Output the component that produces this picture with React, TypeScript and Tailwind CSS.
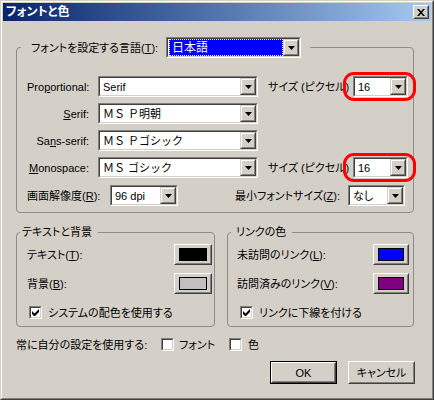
import type { ReactNode } from "react";

function Sunken({ className = "", children }: { className?: string; children: ReactNode }) {
  return (
    <div className={`border border-t-[#808080] border-l-[#808080] border-r-white border-b-white ${className}`}>
      <div className="flex h-full items-center border border-t-[#404040] border-l-[#404040] border-r-[#d4d0c8] border-b-[#d4d0c8] bg-white">
        {children}
      </div>
    </div>
  );
}

function Raised({ className = "", children }: { className?: string; children?: ReactNode }) {
  return (
    <div className={`border border-t-white border-l-white border-r-[#404040] border-b-[#404040] bg-[#d4d0c8] ${className}`}>
      <div className="flex h-full w-full items-center justify-center border border-t-[#d4d0c8] border-l-[#d4d0c8] border-r-[#808080] border-b-[#808080]">
        {children}
      </div>
    </div>
  );
}

function ArrowButton() {
  return (
    <div className="h-full w-[16px] shrink-0 border border-t-[#d4d0c8] border-l-[#d4d0c8] border-r-[#404040] border-b-[#404040] bg-[#d4d0c8]">
      <div className="flex h-full w-full items-center justify-center border border-t-white border-l-white border-r-[#808080] border-b-[#808080]">
        <svg width="7" height="4" viewBox="0 0 7 4">
          <path d="M0 0h7L3.5 4z" fill="#000" />
        </svg>
      </div>
    </div>
  );
}

function Select({ value, className = "", wide = false }: { value: string; className?: string; wide?: boolean }) {
  return (
    <Sunken className={`h-[21px] shrink-0 ${className}`}>
      <span className={`flex-1 truncate pl-[3px] ${wide ? "[font-feature-settings:normal]" : ""}`}>{value}</span>
      <ArrowButton />
    </Sunken>
  );
}

function Marked({ children }: { children: ReactNode }) {
  return (
    <div className="relative h-[21px] w-[55px] shrink-0">
      {children}
      <span className="pointer-events-none absolute -top-[4px] -right-[8px] -bottom-[4px] -left-[10px] rounded-[11px] border-[3px] border-[#ff0000]" />
    </div>
  );
}

function Checkbox({ checked = false }: { checked?: boolean }) {
  return (
    <div className="h-[13px] w-[13px] shrink-0 border border-t-[#808080] border-l-[#808080] border-r-white border-b-white">
      <div className="flex h-full w-full items-center justify-center border border-t-[#404040] border-l-[#404040] border-r-[#d4d0c8] border-b-[#d4d0c8] bg-white">
        {checked && (
          <svg width="7" height="7" viewBox="0 0 7 7">
            <path d="M0 2v3l2 2h1l4-4V0L2.5 4.5z" fill="#000" />
          </svg>
        )}
      </div>
    </div>
  );
}

function ColorButton({ color, className = "" }: { color: string; className?: string }) {
  return (
    <Raised className={`h-[21px] shrink-0 ${className}`}>
      <div className="mx-[3px] h-[13px] flex-1 border border-black" style={{ backgroundColor: color }} />
    </Raised>
  );
}

function FontRow({ label, value, size }: { label: ReactNode; value: string; size?: boolean }) {
  return (
    <div className="flex h-[21px] items-center">
      <span className="w-[62px] shrink-0 text-right whitespace-nowrap">{label}</span>
      <Select value={value} wide={value !== "Serif"} className="ml-[9px] w-[160px]" />
      {size && (
        <>
          <span className="ml-[10px] w-[85px] shrink-0 whitespace-nowrap">サイズ (ピクセル)</span>
          <Marked>
            <Select value="16" className="w-[55px]" />
          </Marked>
        </>
      )}
    </div>
  );
}

export default function App() {
  return (
    <div className="h-[400px] w-[434px] overflow-hidden font-['Liberation_Sans','Noto_Sans_CJK_JP',sans-serif] text-[11px] leading-[14px] text-black [font-feature-settings:'palt']">
      <div className="h-full border border-t-[#d4d0c8] border-l-[#d4d0c8] border-r-[#404040] border-b-[#404040]">
        <div className="flex h-full flex-col border border-t-white border-l-white border-r-[#808080] border-b-[#808080] bg-[#d4d0c8] p-px">
          <div className="flex h-[18px] shrink-0 items-center justify-between bg-linear-to-r from-[#0a246a] to-[#a6caf0] pr-[2px] pl-[3px]">
            <span className="text-[12px] font-bold text-white">フォントと色</span>
            <Raised className="h-[14px] w-[16px]">
              <svg width="8" height="7" viewBox="0 0 8 7">
                <path d="M0 0h2l2 2.2L6 0h2L5 3.5 8 7H6L4 4.8 2 7H0l3-3.5z" fill="#000" />
              </svg>
            </Raised>
          </div>

          <div className="flex flex-1 flex-col pr-[17px] pl-[13px]">
            <fieldset className="mt-[16px] rounded-[4px] border border-[#8c8c8c] p-0">
              <legend className="ml-[4px] flex items-center pr-[9px] pl-[10px]">
                <span className="w-[135px] shrink-0 whitespace-nowrap">
                  フォントを設定する言語(<span className="underline">T</span>):
                </span>
                <Sunken className="h-[21px] w-[135px]">
                  <span className="ml-px flex h-[17px] flex-1 items-center border border-dotted border-[#ffff80] bg-[#0000ff] pl-[2px] text-[12px] text-white">
                    日本語
                  </span>
                  <ArrowButton />
                </Sunken>
              </legend>
              <div className="flex flex-col gap-[6px] pt-[18px] pb-[6px] pl-[10px]">
                <FontRow label={<>Pro<span className="underline">p</span>ortional:</>} value="Serif" size />
                <FontRow label={<><span className="underline">S</span>erif:</>} value="ＭＳ Ｐ明朝" />
                <FontRow label={<>Sa<span className="underline">n</span>s-serif:</>} value="ＭＳ Ｐゴシック" />
                <FontRow label={<><span className="underline">M</span>onospace:</>} value="ＭＳ ゴシック" size />
                <div className="mt-px flex h-[21px] items-center">
                  <span className="w-[83px] shrink-0 whitespace-nowrap">
                    画面解像度(<span className="underline">R</span>):
                  </span>
                  <Select value="96 dpi" className="w-[68px]" />
                  <span className="ml-[57px] w-[113px] shrink-0 whitespace-nowrap">
                    最小フォントサイズ(<span className="underline">Z</span>):
                  </span>
                  <Select value="なし" className="w-[57px]" />
                </div>
              </div>
            </fieldset>

            <div className="mt-[11px] flex gap-[12px]">
              <fieldset className="w-[199px] shrink-0 rounded-[4px] border border-[#8c8c8c] p-0">
                <legend className="ml-[3px] pr-[6px] pl-[2px] leading-[16px]">テキストと背景</legend>
                <div className="flex flex-col pt-[4px] pr-[2px] pb-[7px] pl-[10px]">
                  <div className="flex h-[21px] items-center justify-between">
                    <span>テキスト(<span className="underline">T</span>):</span>
                    <ColorButton color="#000000" className="w-[38px]" />
                  </div>
                  <div className="mt-[8px] flex h-[21px] items-center justify-between">
                    <span>背景(<span className="underline">B</span>):</span>
                    <ColorButton color="#c0c0c0" className="w-[38px]" />
                  </div>
                  <div className="mt-[12px] flex h-[13px] items-center gap-[6px] pl-[2px]">
                    <Checkbox checked />
                    <span>システムの配色を使用する</span>
                  </div>
                </div>
              </fieldset>

              <fieldset className="flex-1 rounded-[4px] border border-[#8c8c8c] p-0">
                <legend className="ml-[3px] pr-[6px] pl-[5px] leading-[16px]">リンクの色</legend>
                <div className="flex flex-col pt-[4px] pr-[4px] pb-[7px] pl-[9px]">
                  <div className="flex h-[21px] items-center justify-between">
                    <span>未訪問のリンク(<span className="underline">L</span>):</span>
                    <ColorButton color="#0000ff" className="w-[36px]" />
                  </div>
                  <div className="mt-[8px] flex h-[21px] items-center justify-between">
                    <span>訪問済みのリンク(<span className="underline">V</span>):</span>
                    <ColorButton color="#800080" className="w-[36px]" />
                  </div>
                  <div className="mt-[12px] flex h-[13px] items-center gap-[6px] pl-[3px]">
                    <Checkbox checked />
                    <span>リンクに下線を付ける</span>
                  </div>
                </div>
              </fieldset>
            </div>

            <div className="mt-[11px] flex h-[13px] items-center">
              <span className="w-[145px] shrink-0 whitespace-nowrap">常に自分の設定を使用する:</span>
              <Checkbox />
              <span className="ml-[5px] w-[50px] shrink-0">フォント</span>
              <Checkbox />
              <span className="ml-[6px]">色</span>
            </div>

            <div className="mt-[10px] -mr-px flex justify-end gap-[11px]">
              <div className="h-[23px] w-[67px] border border-black">
                <Raised className="h-full w-full">
                  <span>OK</span>
                </Raised>
              </div>
              <Raised className="h-[23px] w-[67px]">
                <span>キャンセル</span>
              </Raised>
            </div>
          </div>
        </div>
      </div>
    </div>
  );
}
